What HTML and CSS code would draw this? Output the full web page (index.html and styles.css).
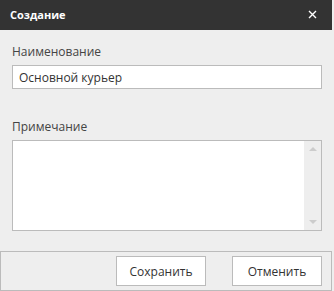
FILE: index.html
```html
<!DOCTYPE html>
<html lang="ru">

<head>
    <meta charset="UTF-8">
    <meta name="viewport" content="width=device-width, initial-scale=1.0">
    <title>Создание</title>
    <link rel="stylesheet" href="styles.css">
</head>

<body>
    <div class="dialog">
        <div class="dialog-header">
            <span class="dialog-title">Создание</span>
            <span class="dialog-close">
                <svg width="9" height="9" viewBox="0 0 9 9">
                    <path d="M1 1L8 8M8 1L1 8" stroke="#fff" stroke-width="1.4" />
                </svg>
            </span>
        </div>
        <div class="dialog-body">
            <div class="field">
                <label for="name">Наименование</label>
                <input type="text" id="name" value="Основной курьер">
            </div>
            <div class="field">
                <label for="note">Примечание</label>
                <div class="memo">
                    <div class="memo-text" id="note"></div>
                    <div class="memo-scroll">
                        <span class="arrow up"></span>
                        <span class="arrow down"></span>
                    </div>
                </div>
            </div>
        </div>
        <div class="dialog-footer">
            <button type="button">Сохранить</button>
            <button type="button">Отменить</button>
        </div>
    </div>
</body>

</html>
```

FILE: styles.css
```css
* {
    margin: 0;
    padding: 0;
    box-sizing: border-box;
}

body {
    background-color: #eee;
    font-family: "Open Sans", "Noto Sans", sans-serif;
    color: #444;
}

.dialog {
    width: 332px;
}

.dialog-header {
    height: 30px;
    background-color: #333;
    display: flex;
    align-items: center;
    justify-content: space-between;
    padding: 0 12px 1px 10px;
}

.dialog-title {
    color: #fff;
    font-weight: bold;
    font-size: 11px;
}

.dialog-close {
    display: flex;
    margin-right: 3px;
}

.dialog-body {
    padding: 13px 10px 20px 12px;
}

.field label {
    display: block;
    font-size: 12px;
    line-height: 18px;
    margin-bottom: 4px;
}

.field {
    margin-bottom: 29px;
}

.field:last-child {
    margin-bottom: 0;
}

input[type="text"] {
    display: block;
    width: 310px;
    height: 24px;
    border: 1px solid #bbb;
    background-color: #fff;
    padding: 0 6px;
    font-family: inherit;
    font-size: 12px;
    color: #333;
    outline: none;
}

.memo {
    display: flex;
    width: 310px;
    height: 91px;
    border: 1px solid #bbb;
    background-color: #fff;
}

.memo-text {
    flex: 1;
}

.memo-scroll {
    width: 17px;
    background-color: #eee;
    display: flex;
    flex-direction: column;
    justify-content: space-between;
    align-items: center;
    padding: 6px 0;
}

.arrow {
    width: 0;
    height: 0;
    border-left: 4px solid transparent;
    border-right: 4px solid transparent;
}

.arrow.up {
    border-bottom: 4px solid #ccc;
}

.arrow.down {
    border-top: 4px solid #ccc;
}

.dialog-footer {
    height: 40px;
    border: 1px solid #bbb;
    display: flex;
    justify-content: flex-end;
    align-items: center;
    gap: 26px;
    padding-right: 9px;
}

button {
    width: 90px;
    height: 30px;
    border: 1px solid #bbb;
    background-color: #fff;
    font-family: inherit;
    font-size: 12px;
    color: #333;
}
```
